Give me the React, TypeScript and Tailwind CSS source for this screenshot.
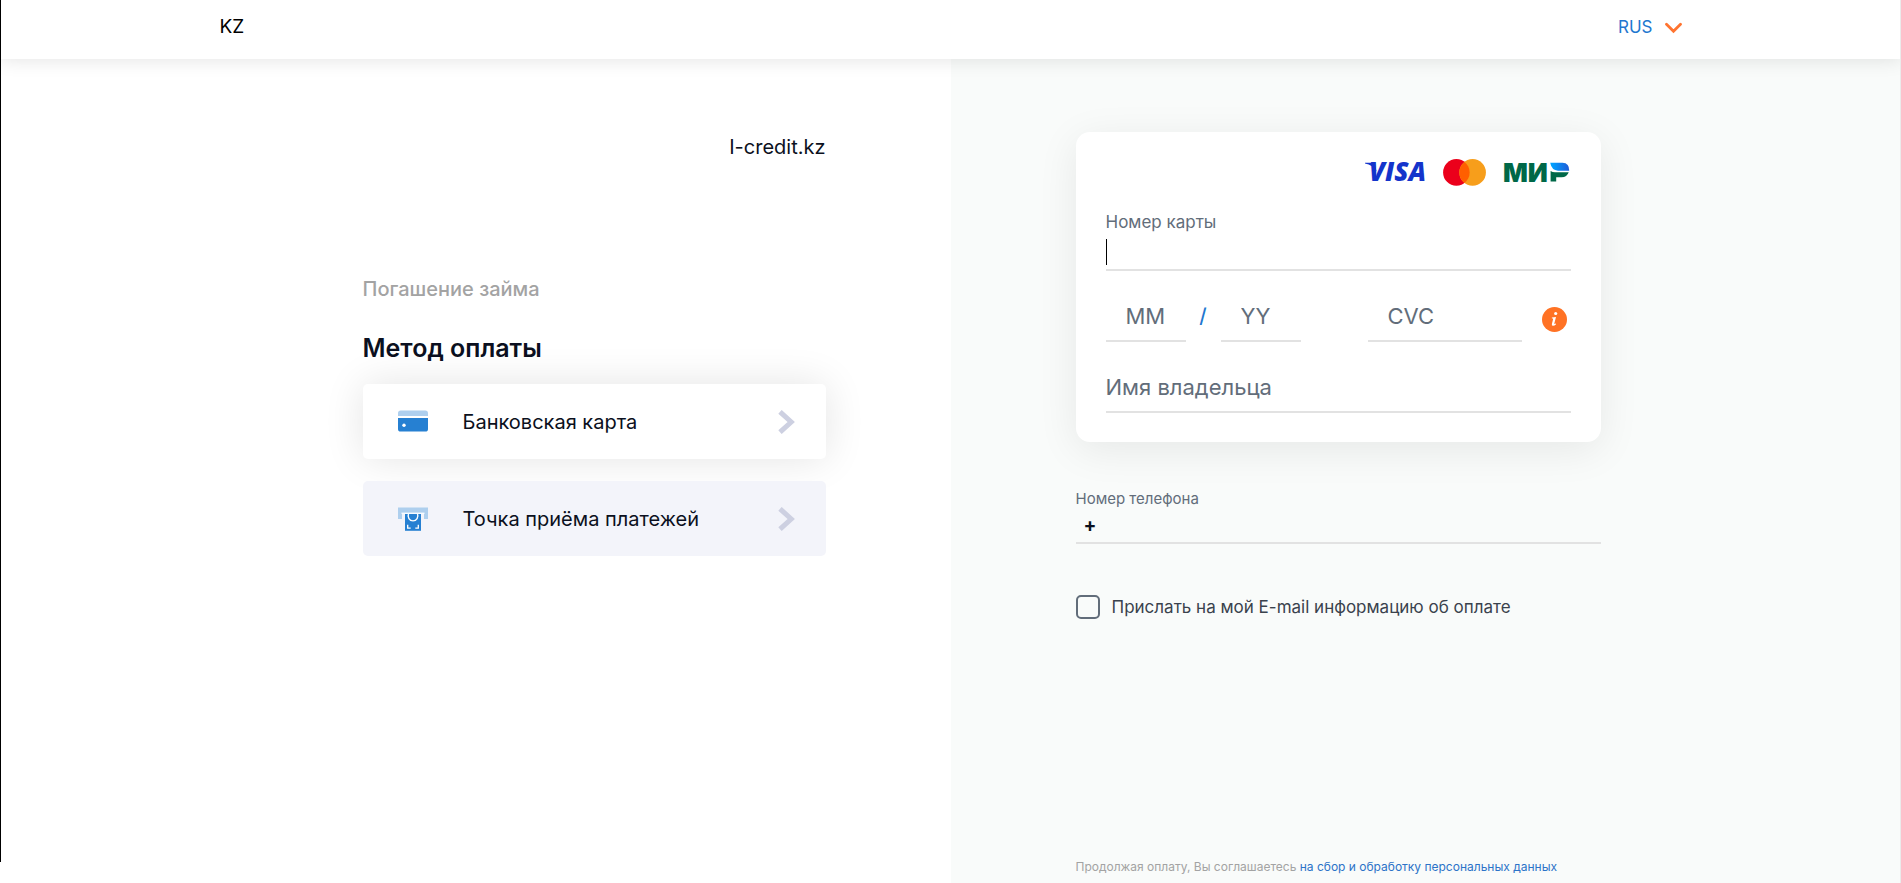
import type { ReactNode } from 'react';

const line = 'border-b-2 border-[#e2e2e2] bg-transparent outline-none';
const fieldText = 'text-[22px] leading-7 text-[#0b1020] placeholder:text-[#626d7a] placeholder:opacity-100';

function VisaLogo() {
  return (
    <svg width="66" height="28" viewBox="0 0 66 28" role="img" aria-label="Visa" className="shrink-0 overflow-visible">
      <path d="M4 4.800H11.400Q13.500 5 14 7.200L15.600 13.400Q12 7 4 5.500Z" fill="#1434cb" />
      <text x="8" y="23.200" fontFamily="Open Sans" fontWeight="800" fontStyle="italic" fontSize="26" fill="#1434cb">
        VISA
      </text>
    </svg>
  );
}

function MastercardLogo() {
  return (
    <svg width="44" height="28" viewBox="0 0 44 28" role="img" aria-label="Mastercard" className="shrink-0">
      <circle cx="13.400" cy="14.400" r="13.300" fill="#eb001b" />
      <circle cx="29.600" cy="14.400" r="13.300" fill="#f79e1b" />
      <path d="M21.500 3.900A13.300 13.300 0 0 1 21.500 24.900A13.300 13.300 0 0 1 21.500 3.900Z" fill="#ff5f00" />
    </svg>
  );
}

function MirLogo() {
  return (
    <svg width="68" height="28" viewBox="0 0 68 28" role="img" aria-label="Мир" className="shrink-0 overflow-visible">
      <defs>
        <linearGradient id="mir-blue" x1="0" x2="1" y1="0" y2="0">
          <stop offset="0.1" stopColor="#00a0ff" />
          <stop offset="1" stopColor="#1f5cd7" />
        </linearGradient>
      </defs>
      <text x="0" y="23.600" fontFamily="Inter" fontWeight="900" fontSize="26" fill="#006848">
        МИ
      </text>
      <path d="M47.600 13V23.600H53.200V19.200H58.600Q64 19.200 65.700 14.200H52Q49.500 14.200 47.600 13Z" fill="#006848" />
      <path d="M47.200 4.800H59.500Q66.500 5.100 66.200 12.800H55Q48.700 12.400 47.200 4.800Z" fill="url(#mir-blue)" />
    </svg>
  );
}

function CardIcon() {
  return (
    <svg width="30" height="30" viewBox="0 0 30 30" aria-hidden="true">
      <path d="M0 9V6.200Q0 3.500 2.700 3.500H27.300Q30 3.500 30 6.200V9Z" fill="#aecfee" />
      <path d="M0 11H30V22Q30 24.600 27.300 24.600H2.700Q0 24.600 0 22Z" fill="#2680d2" />
      <circle cx="6" cy="18.300" r="1.700" fill="#fff" />
    </svg>
  );
}

function TerminalIcon() {
  return (
    <svg width="30" height="30" viewBox="0 0 30 30" aria-hidden="true">
      <path d="M0 3.500H30V15H26V10H4V15H0Z" fill="#aecfee" />
      <path d="M3.500 8.600H26.500V10H3.500Z" fill="#f8fbff" />
      <path d="M7 10H23V26.800H7Z" fill="#2680d2" />
      <path d="M10.500 10A4.900 4.900 0 1 0 19.500 10" fill="none" stroke="#fff" strokeWidth="1.400" />
      <path d="M9.700 20.800V24.100H12.700M20.300 20.800V24.100H17.300" fill="none" stroke="#fff" strokeWidth="1.300" />
    </svg>
  );
}

function Method({ icon, active, children }: { icon: ReactNode; active?: boolean; children: ReactNode }) {
  return (
    <button
      type="button"
      className={`flex h-[75px] w-full items-center rounded-[5px] pr-[31px] pl-[35px] text-left text-[20px] text-[#0b1020] ${
        active ? 'bg-white shadow-[0_0_40px_rgba(0,0,0,0.11)]' : 'relative bg-[#f3f4fa]'
      }`}
    >
      {icon}
      <span className="ml-[35px] flex-1">{children}</span>
      <svg width="17" height="24" viewBox="0 0 17 24" aria-hidden="true">
        <path d="M2 1.800L13.200 12L2 22.200" fill="none" stroke="#cdd0e1" strokeWidth="5" />
      </svg>
    </button>
  );
}

export default function App() {
  return (
    <div className="relative flex min-h-screen flex-col bg-white font-['Inter','Noto_Sans',sans-serif] text-[#0b1020]">
      <div className="absolute top-0 bottom-[21px] left-0 z-20 w-px bg-black" />
      <div className="absolute inset-y-0 right-0 z-20 w-px bg-[#ebebeb]" />

      <header className="relative z-10 bg-white px-5 shadow-[0_0_20px_rgba(0,0,0,0.12)]">
        <div className="mx-auto flex h-[59px] max-w-[1462px] items-center justify-between pb-1">
          <span className="text-[19px] text-black">KZ</span>
          <button type="button" className="flex items-center gap-3 text-[17px] text-[#2277cf]">
            RUS
            <svg width="17" height="12" viewBox="0 0 17 12" aria-hidden="true">
              <path d="M1.500 2.200L8.500 9.200L15.500 2.200" fill="none" stroke="#ff7430" strokeWidth="2.800" strokeLinecap="round" />
            </svg>
          </button>
        </div>
      </header>

      <main className="grid flex-1 grid-cols-2">
        <section className="flex justify-end pr-[125px] pl-5">
          <div className="w-full max-w-[463px] pt-[74px]">
            <p className="text-right text-[20px] leading-7">I-credit.kz</p>
            <p className="mt-[114px] text-[20px] leading-7 font-medium text-[#a3a3a3]">Погашение займа</p>
            <h1 className="mt-[29px] text-[25px] leading-8 font-semibold">Метод оплаты</h1>
            <div className="mt-5 flex flex-col gap-[22px]">
              <Method active icon={<CardIcon />}>Банковская карта</Method>
              <Method icon={<TerminalIcon />}>Точка приёма платежей</Method>
            </div>
          </div>
        </section>

        <section className="bg-[#f9fbfa] pr-5 pl-[125px]">
          <form className="flex h-full w-full max-w-[525px] flex-col pt-[73px]">
            <div className="rounded-[14px] bg-white px-[30px] pt-[26px] pb-[29px] shadow-[0_8px_40px_rgba(0,0,0,0.08)]">
              <div className="flex justify-end gap-4">
                <VisaLogo />
                <MastercardLogo />
                <MirLogo />
              </div>

              <label htmlFor="card-number" className="mt-6 block text-[17px] leading-6 text-[#626d7a]">
                Номер карты
              </label>
              <div className="relative">
                <input id="card-number" autoFocus inputMode="numeric" className={`block h-[37px] w-full caret-transparent ${line} ${fieldText}`} />
                <span className="pointer-events-none absolute top-[5px] left-0 h-[26px] w-px bg-black" />
              </div>

              <div className="mt-6 flex items-end">
                <input aria-label="Месяц" placeholder="MM" className={`h-[47px] w-20 pb-1 pl-5 ${line} ${fieldText}`} />
                <span className="w-[35px] pb-[10px] text-center text-[20px] leading-8 font-medium text-[#2277cf]">/</span>
                <input aria-label="Год" placeholder="YY" className={`h-[47px] w-20 pb-1 pl-5 ${line} ${fieldText}`} />
                <input aria-label="CVC" placeholder="CVC" className={`ml-auto h-[47px] w-[154px] pb-1 pl-5 ${line} ${fieldText}`} />
                <button type="button" aria-label="Что такое CVC" className="mr-1 mb-[10px] ml-5">
                  <svg width="25" height="25" viewBox="0 0 25 25" aria-hidden="true">
                    <circle cx="12.500" cy="12.500" r="12.500" fill="#ff7224" />
                    <circle cx="13.700" cy="6.500" r="1.600" fill="#fff" />
                    <path d="M9.900 10.500L14 9.900L12.300 16.600Q12.200 17.500 13.900 16.600L14.100 17.200Q12.300 18.900 10.700 18.700Q9.500 18.400 9.900 16.900L11.200 11.800L9.800 11.200Z" fill="#fff" />
                  </svg>
                </button>
              </div>

              <input aria-label="Имя владельца" placeholder="Имя владельца" className={`mt-6 block h-[47px] w-full pb-1 ${line} ${fieldText}`} />
            </div>

            <label htmlFor="phone" className="mt-[45px] text-[15px] leading-6 text-[#626d7a]">
              Номер телефона
            </label>
            <input id="phone" type="tel" defaultValue="+" className={`h-[33px] pl-2 pb-[2px] text-[19px] font-bold text-[#0b1020] ${line}`} />

            <label className="mt-[51px] flex items-center gap-3 text-[17px] leading-6 text-[#3a424d]">
              <input type="checkbox" className="size-6 shrink-0 appearance-none rounded-[5px] border-2 border-[#626d7a] checked:bg-[#2277cf]" />
              Прислать на мой E-mail информацию об оплате
            </label>

            <p className="mt-auto pt-10 pb-[6px] text-[12px] leading-5 text-[#a3a3a3]">
              Продолжая оплату, Вы соглашаетесь{' '}
              <a href="#terms" className="text-[#2c73c8]">на сбор и обработку персональных данных</a>
            </p>
          </form>
        </section>
      </main>
    </div>
  );
}
